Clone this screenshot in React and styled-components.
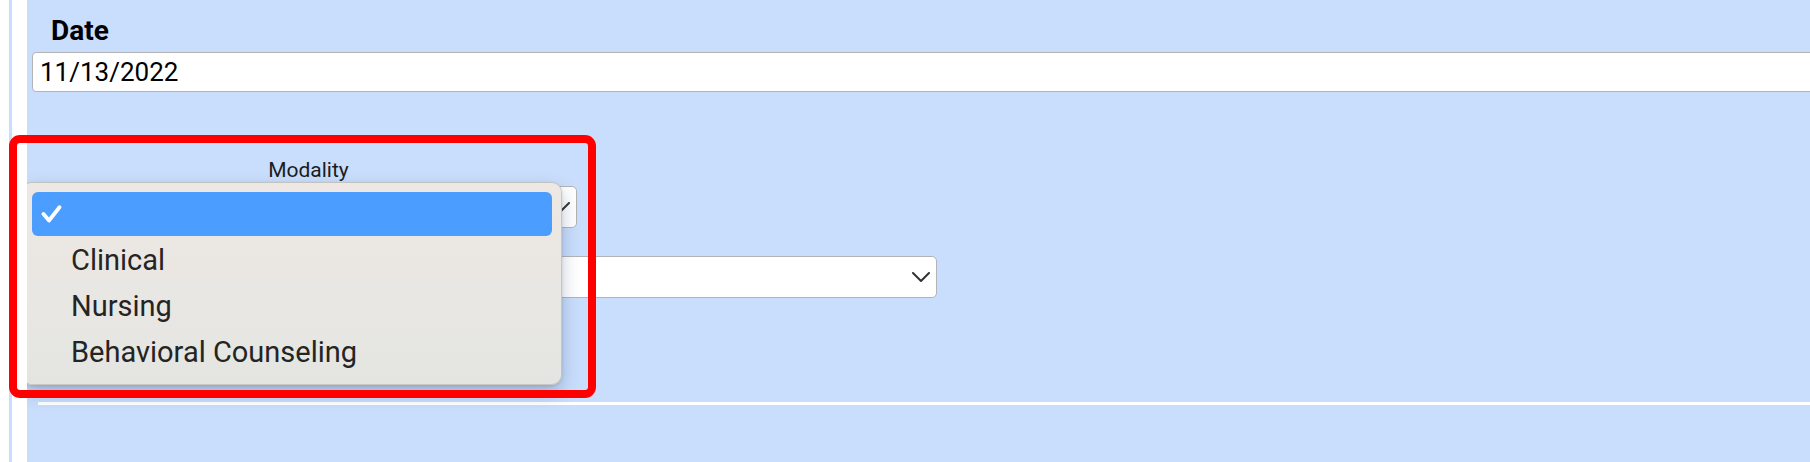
import React from 'react';
import styled, { createGlobalStyle } from 'styled-components';

const FONT = `Roboto, "Liberation Sans", Arial, sans-serif`;

const GlobalStyle = createGlobalStyle`
  html, body {
    margin: 0;
    padding: 0;
    background: #fff;
  }
  body {
    font-family: ${FONT};
  }
  * {
    box-sizing: border-box;
  }
`;

const Page = styled.div`
  position: relative;
  display: flex;
  min-height: 100vh;
  padding-left: 9px;
  overflow: hidden;
`;

const Rail = styled.div`
  width: 3px;
  flex-shrink: 0;
  background: #c9defc;
`;

const Gutter = styled.div`
  width: 15px;
  flex-shrink: 0;
`;

const Panel = styled.main`
  flex: 1;
  min-width: 0;
  padding: 15px 0 0 5px;
  background: #c9defc;
  overflow: hidden;
`;

const DateLabel = styled.label`
  display: block;
  margin-left: 19px;
  font-size: 28px;
  font-weight: 700;
  line-height: 32px;
  color: #000;
`;

const DateInput = styled.input`
  display: block;
  width: calc(100% + 40px);
  height: 40px;
  margin: 5px 0 0;
  padding: 0 7px;
  border: 1px solid #b3b3b3;
  border-radius: 4px;
  background: #fff;
  font-family: ${FONT};
  font-size: 26px;
  color: #000;
  outline: none;
`;

const Field = styled.div`
  position: relative;
  width: 553px;
  margin-top: 66px;
`;

const FieldLabel = styled.div`
  text-align: center;
  font-size: 21px;
  line-height: 24px;
  color: #1c1c1c;
`;

const SelectBox = styled.div`
  display: flex;
  align-items: center;
  justify-content: flex-end;
  width: ${(p) => p.$width}px;
  height: 42px;
  margin-top: ${(p) => p.$top}px;
  padding-right: 6px;
  border: 1px solid #b3b3b3;
  border-radius: 5px;
  background: #fff;
`;

const Divider = styled.div`
  width: calc(100% + 40px);
  height: 3px;
  margin: 104px 0 0 6px;
  background: #fff;
`;

const Popup = styled.ul`
  position: absolute;
  top: 24px;
  left: -10px;
  display: flex;
  flex-direction: column;
  width: 540px;
  margin: 0;
  padding: 8px 9px 9px;
  list-style: none;
  border: 1px solid rgba(0, 0, 0, 0.14);
  border-radius: 10px;
  background: linear-gradient(180deg, #ede8e4 0%, #e9e7e3 55%, #e4e5e1 100%);
  box-shadow: 0 8px 18px rgba(40, 60, 100, 0.28), 0 1px 3px rgba(0, 0, 0, 0.12);
`;

const Option = styled.li`
  display: flex;
  align-items: center;
  height: 44px;
  margin: 1px 0;
  padding-left: 9px;
  border-radius: 6px;
  background: ${(p) => (p.$selected ? '#4b9dff' : 'transparent')};
  font-size: 29px;
  line-height: 44px;
  color: #242424;
`;

const CheckSlot = styled.span`
  display: flex;
  align-items: center;
  width: 30px;
  height: 17px;
  flex-shrink: 0;
`;

const Annotation = styled.div`
  position: absolute;
  top: 135px;
  left: 9px;
  width: 587px;
  height: 263px;
  border: 8px solid #ff0000;
  border-radius: 11px;
  pointer-events: none;
`;

function Chevron() {
  return (
    <svg width="18" height="10" viewBox="0 0 18 10" fill="none">
      <path d="M1 1 L9 9 L17 1" stroke="#333" strokeWidth="2" strokeLinecap="round" strokeLinejoin="round" />
    </svg>
  );
}

function Check() {
  return (
    <svg width="21" height="18" viewBox="0 0 21 18" fill="none">
      <path d="M2.5 9 L8 15.5 L18.5 2.2" stroke="#fff" strokeWidth="3.8" strokeLinecap="round" strokeLinejoin="round" />
    </svg>
  );
}

const options = ['', 'Clinical', 'Nursing', 'Behavioral Counseling'];

export default function App() {
  return (
    <>
      <GlobalStyle />
      <Page>
        <Rail />
        <Gutter />
        <Panel>
          <DateLabel htmlFor="date">Date</DateLabel>
          <DateInput id="date" type="text" value="11/13/2022" readOnly />

          <Field>
            <FieldLabel>Modality</FieldLabel>
            <SelectBox $width={545} $top={4}>
              <Chevron />
            </SelectBox>
            <Popup>
              {options.map((opt, i) => (
                <Option key={i} $selected={i === 0}>
                  <CheckSlot>{i === 0 && <Check />}</CheckSlot>
                  {opt}
                </Option>
              ))}
            </Popup>
          </Field>

          <SelectBox $width={905} $top={28}>
            <Chevron />
          </SelectBox>

          <Divider />
        </Panel>
        <Annotation />
      </Page>
    </>
  );
}
